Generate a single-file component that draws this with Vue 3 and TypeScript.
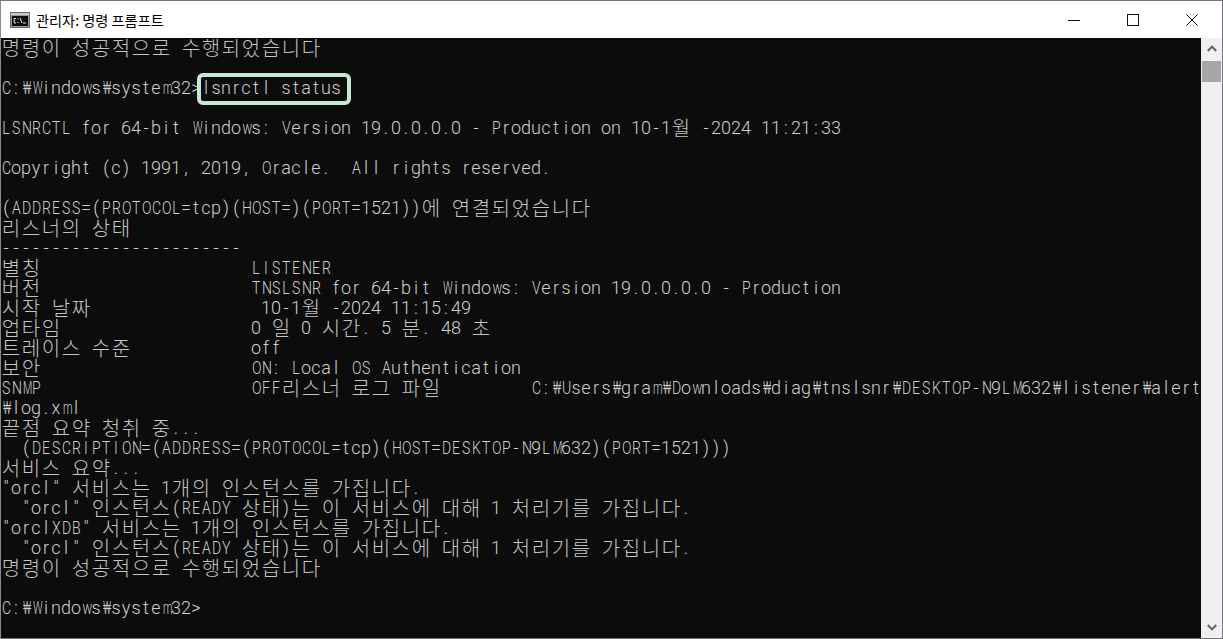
<script setup lang="ts">
interface Cell { ch: string; kind: string }

function isWide(c: string): boolean {
  return c.charCodeAt(0) >= 0x1100 && c !== '₩'
}
const col = (label: string, n: number): string => {
  let w = 0
  for (const c of label) w += isWide(c) ? 2 : 1
  return label + ' '.repeat(Math.max(0, n - w))
}
function kindOf(c: string): string {
  if (isWide(c)) return 'wide'
  if ('MWm₩'.includes(c)) return 'tight'
  if (c === 'w') return 'lean'
  if (/[A-Z]/.test(c)) return 'caps'
  return 'plain'
}

const source: string[] = [
  '명령이 성공적으로 수행되었습니다',
  '',
  'C:₩Windows₩system32>',
  '',
  'LSNRCTL for 64-bit Windows: Version 19.0.0.0.0 - Production on 10-1월 -2024 11:21:33',
  '',
  'Copyright (c) 1991, 2019, Oracle.  All rights reserved.',
  '',
  '(ADDRESS=(PROTOCOL=tcp)(HOST=)(PORT=1521))에 연결되었습니다',
  '리스너의 상태',
  '------------------------',
  col('별칭', 25) + 'LISTENER',
  col('버전', 25) + 'TNSLSNR for 64-bit Windows: Version 19.0.0.0.0 - Production',
  col('시작 날짜', 25) + ' 10-1월 -2024 11:15:49',
  col('업타임', 25) + '0 일 0 시간. 5 분. 48 초',
  col('트레이스 수준', 25) + 'off',
  col('보안', 25) + 'ON: Local OS Authentication',
  col('SNMP', 25) + 'OFF리스너 로그 파일         C:₩Users₩gram₩Downloads₩diag₩tnslsnr₩DESKTOP-N9LM632₩listener₩alert',
  '₩log.xml',
  '끝점 요약 청취 중...',
  '  (DESCRIPTION=(ADDRESS=(PROTOCOL=tcp)(HOST=DESKTOP-N9LM632)(PORT=1521)))',
  '서비스 요약...',
  '"orcl" 서비스는 1개의 인스턴스를 가집니다.',
  '  "orcl" 인스턴스(READY 상태)는 이 서비스에 대해 1 처리기를 가집니다.',
  '"orclXDB" 서비스는 1개의 인스턴스를 가집니다.',
  '  "orcl" 인스턴스(READY 상태)는 이 서비스에 대해 1 처리기를 가집니다.',
  '명령이 성공적으로 수행되었습니다',
  '',
  'C:₩Windows₩system32>',
]

const cells = (s: string): Cell[] => Array.from(s).map((ch) => ({ ch, kind: kindOf(ch) }))
const lines = source.map(cells)
const command = cells('lsnrctl status')
</script>

<template>
  <div class="window">
    <header class="titlebar">
      <svg class="app-icon" width="20" height="16" viewBox="0 0 20 16">
        <rect x="0.5" y="0.5" width="19" height="15" fill="#9a9a9a" stroke="#6a6a6a" />
        <rect x="1" y="1" width="18" height="2" fill="#c9c9c9" />
        <rect x="2" y="4" width="16" height="10" fill="#0c0c0c" />
        <path d="M6 6.5H4.2V11H6M8 6.5v1M8 10v1M10 6l2 5M13 11h3" stroke="#e8e8e8" fill="none" stroke-width="1" />
      </svg>
      <span class="title">관리자: 명령 프롬프트</span>
      <div class="controls">
        <button class="ctl" aria-label="최소화">
          <svg width="12" height="12" viewBox="0 0 12 12"><path d="M0 6.5H12" stroke="#111" /></svg>
        </button>
        <button class="ctl" aria-label="최대화">
          <svg width="12" height="12" viewBox="0 0 12 12"><rect x="0.5" y="0.5" width="11" height="11" fill="none" stroke="#111" /></svg>
        </button>
        <button class="ctl" aria-label="닫기">
          <svg width="12" height="12" viewBox="0 0 12 12"><path d="M0.3 0.3L11.7 11.7M11.7 0.3L0.3 11.7" stroke="#111" /></svg>
        </button>
      </div>
    </header>
    <div class="body">
      <main class="console">
        <div v-for="(line, i) in lines" :key="i" class="line">
          <span v-for="(c, j) in line" :key="j" class="cell" :class="c.kind">{{ c.ch }}</span>
          <span v-if="i === 2" class="mark">
            <span v-for="(c, j) in command" :key="j" class="cell" :class="c.kind">{{ c.ch }}</span>
          </span>
        </div>
      </main>
      <aside class="scrollbar">
        <svg class="arrow" width="10" height="7" viewBox="0 0 10 7"><path d="M0.8 6L5 1.6L9.2 6" fill="none" stroke="#606060" stroke-width="2" /></svg>
        <div class="thumb"></div>
        <svg class="arrow down" width="10" height="7" viewBox="0 0 10 7"><path d="M0.8 1L5 5.4L9.2 1" fill="none" stroke="#606060" stroke-width="2" /></svg>
      </aside>
    </div>
  </div>
</template>

<style>
html, body { margin: 0; background: #fff; overflow: hidden; }
</style>

<style scoped>
.window {
  width: 1223px;
  height: 639px;
  box-sizing: border-box;
  border: 1px solid #6f7780;
  border-left-color: #8a8a8a;
  display: flex;
  flex-direction: column;
  overflow: hidden;
  background: #fff;
}
.titlebar {
  height: 37px;
  flex: none;
  display: flex;
  align-items: center;
  padding-left: 9px;
  background: #fff;
}
.app-icon { flex: none; }
.title {
  margin-left: 6px;
  font-family: "Noto Sans CJK KR", "Noto Sans", sans-serif;
  font-size: 14.2px;
  color: #000;
  white-space: nowrap;
}
.controls { margin-left: auto; margin-right: 0.5px; display: flex; height: 100%; }
.ctl {
  width: 59px;
  height: 100%;
  padding: 0;
  border: 0;
  background: transparent;
  display: flex;
  align-items: center;
  justify-content: center;
}
.body { flex: 1; display: flex; min-height: 0; }
.console {
  flex: 1;
  min-width: 0;
  background: #0c0c0c;
  color: #d0d0d0;
  overflow: hidden;
}
.line {
  height: 20px;
  white-space: pre;
  display: flex;
  font-family: Roboto, "Liberation Sans", sans-serif;
  font-weight: 300;
  font-size: 18px;
  line-height: 20px;
}
.cell {
  display: block;
  flex: none;
  width: 10px;
  height: 20px;
  text-align: center;
}
.cell.caps { transform: scaleX(0.78); }
.cell.tight { transform: scaleX(0.6); }
.cell.lean { transform: scaleX(0.72); }
.cell.wide {
  width: 20px;
  font-family: "Noto Sans CJK KR", sans-serif;
  font-size: 20px;
  line-height: 20px;
  font-weight: 300;
  color: #c4c4c4;
}
.mark {
  display: flex;
  flex: none;
  box-sizing: border-box;
  height: 24px;
  margin-top: -1px;
  padding: 1px 6px 0 0;
  align-items: flex-start;
  outline: 4px solid #c6e8d2;
  border-radius: 2px;
}
.scrollbar {
  width: 21px;
  flex: none;
  background: #f0f0f0;
  display: flex;
  flex-direction: column;
  align-items: center;
}
.arrow { flex: none; margin-top: 7px; }
.thumb { width: 19px; height: 21px; margin-top: 9px; background: #a6a6a6; flex: none; }
.arrow.down { margin-top: auto; margin-bottom: 7px; }
</style>
